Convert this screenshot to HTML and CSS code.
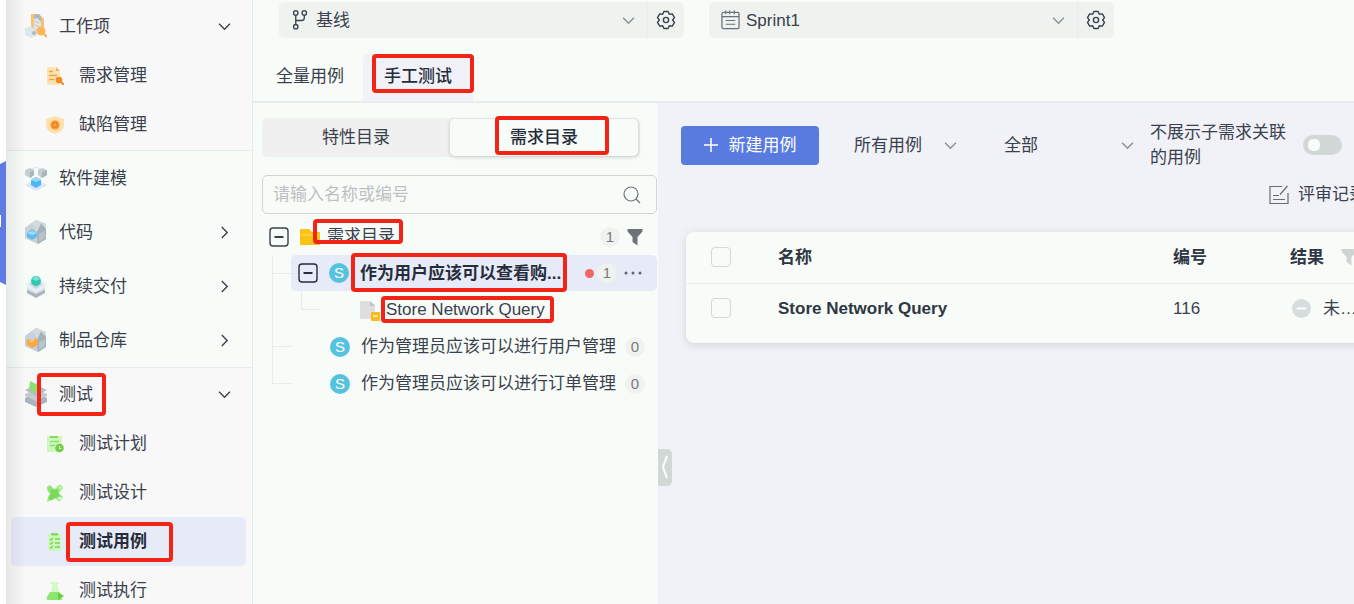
FILE: index.html
```html
<!DOCTYPE html>
<html lang="zh-CN">
<head>
    <meta charset="utf-8" />
    <title>测试用例</title>
    <link rel="stylesheet" href="styles.css">
</head>
<body>
    <!-- shared icons -->
    <svg class="defs" aria-hidden="true">
        <symbol id="down" viewBox="0 0 12 12"><path d="M1 3.5l5 5 5-5" fill="none" stroke="currentColor" stroke-width="1.3"/></symbol>
        <symbol id="right" viewBox="0 0 12 12"><path d="M3.5 1l5 5-5 5" fill="none" stroke="currentColor" stroke-width="1.3"/></symbol>
        <symbol id="gear" viewBox="0 0 20 20">
            <path d="M7.9 1.500h4.200L13.300 4.300 16.300 3.900 18.500 7.600 16.600 10l1.900 2.400-2.200 3.700-3-.4-1.200 2.800H7.900l-1.200-2.800-3 .4-2.200-3.700L3.400 10 1.500 7.600l2.200-3.700 3 .4z" fill="none" stroke="currentColor" stroke-width="1.400" stroke-linejoin="round"/>
            <circle cx="10" cy="10" r="2.600" fill="none" stroke="currentColor" stroke-width="1.4"/>
        </symbol>
        <symbol id="funnel" viewBox="0 0 16 18"><path d="M.5 1h15v2.500L10.500 9v8.500L5.500 14V9L.5 3.500z" fill="currentColor"/></symbol>
        <symbol id="minus" viewBox="0 0 20 20">
            <rect x="1" y="1" width="18" height="18" rx="3" fill="none" stroke="currentColor" stroke-width="1.400"/>
            <path d="M5.500 10h9" stroke="currentColor" stroke-width="2"/>
        </symbol>
        <symbol id="cube" viewBox="0 0 22 26">
            <path d="M0 9 11 1l10 4v15l-8 5L0 19z" fill="#b8c3cb"/>
            <path d="M7 4 12 1l9 4v5l-5-6-4 9z" fill="#d3dade"/>
            <path d="M12 13l4-8 5 5v10l-8 5z" fill="#a6b2ba"/>
            <path d="M0 9l7-5 5 9v11L0 19z" fill="#c9d2d8"/>
            <path d="M14 15l6-3v7l-6 4z" fill="#b9c4ca"/>
        </symbol>
    </svg>

    <div class="app">
        <div class="rail"><div class="rail-tab"></div></div>

        <nav class="sidebar">
            <div class="group group-open">
                <a class="item" href="#">
                    <svg class="icon" viewBox="0 0 22 26">
                        <path d="M6 1h8l5 5v14H6z" fill="#fbc172"/><path d="M9 4c3-3 7-2 7 2v12l-7-2z" fill="#dfe6ea"/>
                        <path d="M9 2c2-2 6-1 7 2v5l-4-4-3 1z" fill="#aeb9be"/><path d="M10 8l4 2m-4 2 4 2" stroke="#b5c0c9"/>
                        <path d="M0 15l6-2 6 6v4l-6 2-6-3z" fill="#dce6ee"/><circle cx="9" cy="20" r="2" fill="#adbac2"/>
                        <circle cx="16" cy="18" r="4.500" fill="#fdb75a"/><path d="M19 21l3 3" stroke="#f6b055" stroke-width="2"/>
                    </svg>
                    <span>工作项</span>
                    <svg class="arrow"><use href="#down"/></svg>
                </a>
                <a class="item sub" href="#">
                    <svg class="icon" viewBox="0 0 18 18">
                        <path d="M1 0h9l4 4v14H1z" fill="#fde3b5"/><path d="M10 0l4 4h-4z" fill="#f8b455"/>
                        <path d="M3 4.500h4M3 8.500h8M3 12.500h5" stroke="#f4a03a" stroke-width="1.500"/>
                        <circle cx="13" cy="13" r="3.300" fill="#f58a1f"/><path d="M15 15l3 3" stroke="#f58a1f" stroke-width="2"/>
                    </svg>
                    <span>需求管理</span>
                </a>
                <a class="item sub" href="#">
                    <svg class="icon" viewBox="0 0 18 18">
                        <path d="M9 0l9 3v6c0 5-4 7-9 9-5-2-9-4-9-9V3z" fill="#fde0ab"/>
                        <circle cx="9" cy="9" r="4.800" fill="#f9a545"/><circle cx="9" cy="9" r="2.500" fill="none" stroke="#e9801e" stroke-width="1.500"/>
                    </svg>
                    <span>缺陷管理</span>
                </a>
            </div>

            <div class="group">
                <a class="item" href="#">
                    <svg class="icon" viewBox="0 0 22 26">
                        <path d="M0 20l11-6 11 6-11 6z" fill="#dbe5f5"/><path d="M5 5l6-3 6 3M4 9l5 7m9-7-5 7" fill="none" stroke="#d4e4ef"/>
                        <path d="M0 5l5-2 4 2v5l-4 3-5-3zM13 5l4-2 5 2v5l-5 3-4-3z" fill="#c5cdd2"/>
                        <path d="M5 7l4-2v5l-4 3zM17 7l5-2v5l-5 3z" fill="#abb5bc"/>
                        <path d="M6 15l5-3 5 3v5l-5 3-5-3z" fill="#4db9f2"/><path d="M6 15l5-3 5 3-5 2z" fill="#94d8fa"/>
                    </svg>
                    <span>软件建模</span>
                </a>
                <a class="item" href="#">
                    <svg class="icon" viewBox="0 0 22 26">
                        <use href="#cube"/><path d="M2 14l5-4 5 4v4l-5 3-5-3z" fill="#5dbcf2"/><path d="M2 14l5-2 5 2-5 2z" fill="#a4dcf9"/>
                    </svg>
                    <span>代码</span>
                    <svg class="arrow"><use href="#right"/></svg>
                </a>
                <a class="item" href="#">
                    <svg class="icon" viewBox="0 0 22 26">
                        <path d="M2 10l9-4 9 4v9l-9 5-9-5z" fill="#d5dee6"/><path d="M2 17l9 4 9-4v3l-9 5-9-5z" fill="#aab5bd"/>
                        <path d="M0 11l5-3 6 5 6-5 5 3-3 4-8 5-8-5z" fill="#e8eef4"/><path d="M4 11l7 5 7-5-7-3z" fill="#c6d6dd"/>
                        <circle cx="11" cy="8" r="5" fill="#2ec8b5"/><path d="M7 6l4-3 4 3-4 2z" fill="#7ce3d3"/>
                    </svg>
                    <span>持续交付</span>
                    <svg class="arrow"><use href="#right"/></svg>
                </a>
                <a class="item" href="#">
                    <svg class="icon" viewBox="0 0 22 26">
                        <use href="#cube"/><path d="M1 14l3-2 3 2 3-3 3 2v4l-3 3-3 1-5-3z" fill="#f9a944"/><path d="M4 14l3 1 3-3" stroke="#fdd18c" fill="none"/>
                    </svg>
                    <span>制品仓库</span>
                    <svg class="arrow"><use href="#right"/></svg>
                </a>
            </div>

            <div class="group group-open">
                <a class="item" href="#">
                    <svg class="icon" viewBox="0 0 22 26">
                        <path d="M0 17l11-5 11 5v4l-11 5-11-5z" fill="#a9b5bc"/><path d="M0 13l11-5 11 5v2l-11 5-11-5z" fill="#c1cbd0"/>
                        <path d="M0 9l11-5 11 5-11 6z" fill="#b2bec4"/><path d="M5 0l6 3 5-2v7l-6 4-6-4z" fill="#8be070"/>
                    </svg>
                    <span class="mark mark-lg">测试</span>
                    <svg class="arrow"><use href="#down"/></svg>
                </a>
                <a class="item sub" href="#">
                    <svg class="icon" viewBox="0 0 18 18">
                        <path d="M1 1h15v16H1z" fill="#cdf8bb"/><path d="M4 1h8v2H4z" fill="#83dc61"/>
                        <path d="M4 6.500h9M4 10.500h5" stroke="#8be070" stroke-width="1.500"/>
                        <circle cx="13.500" cy="13" r="4.300" fill="#73cc4c"/><path d="M13.500 11v2.500h2" stroke="#d9fbcb" fill="none"/>
                    </svg>
                    <span>测试计划</span>
                </a>
                <a class="item sub" href="#">
                    <svg class="icon" viewBox="0 0 18 18">
                        <path d="M12 1.500c2-2 6 1 4.500 3.500L6 16.500 1 18l1-5.500z" fill="#a3f088"/>
                        <path d="M1 3l3-2 4 4 9 8-3.500 4.500L9 14 1.500 7z" fill="#8ee772"/>
                        <path d="M5 6l7-1 1 7-7 4-4-1 2-4z" fill="#78da57"/>
                        <path d="M12 13.500l1.500 1.500 1.500-2M13.500 3l1.500 1.500" stroke="#eaffdf" stroke-width="1.500" fill="none"/>
                    </svg>
                    <span>测试设计</span>
                </a>
                <a class="item sub active" href="#">
                    <svg class="icon" viewBox="0 0 18 18">
                        <path d="M2 1h13v17H2z" fill="#cdf8bb"/><path d="M5 0h7v2.500H5z" fill="#83dc61"/>
                        <path d="M4 6l1 1 2-2M4 10l1 1 2-2M4 14l1 1 2-2M9 6h5M9 10h5M9 14h5" stroke="#79d458" stroke-width="1.300" fill="none"/>
                    </svg>
                    <span class="mark mark-case-menu">测试用例</span>
                </a>
                <a class="item sub" href="#">
                    <svg class="icon" viewBox="0 0 18 18">
                        <path d="M4 0h9v2h-1v5l5 10H1L6 7V2H4z" fill="#d3fac4"/><path d="M4 10h8l4 8H2c-1 0-2-1-1-3z" fill="#8be66c"/>
                        <path d="M12 10l6 4-6 4z" fill="#68cf43"/>
                    </svg>
                    <span>测试执行</span>
                </a>
            </div>
        </nav>

        <main class="main">
            <header class="topbar">
                <div class="picker">
                    <svg class="picker-icon" viewBox="0 0 20 22" fill="none" stroke="currentColor" stroke-width="1.400">
                        <circle cx="5" cy="3.500" r="2.300"/><circle cx="14" cy="3.500" r="2.300"/><circle cx="5" cy="18" r="2.300"/>
                        <path d="M5 6v9.500M14 6v2.500c0 2-1 3-3 3H5"/>
                    </svg>
                    <select aria-label="基线"><option>基线</option></select>
                    <svg class="caret"><use href="#down"/></svg>
                    <button class="picker-set" aria-label="基线设置"><svg><use href="#gear"/></svg></button>
                </div>
                <div class="picker">
                    <svg class="picker-icon thin" viewBox="0 0 20 22" fill="none" stroke="currentColor">
                        <rect x="1" y="3" width="18" height="17" rx="1.500" stroke-width="1.300"/>
                        <path d="M1 7.500h18M5 1v4M9 1v4M14 1v4M5 11.500h10M5 15.500h10" stroke-width="1.200"/>
                    </svg>
                    <select aria-label="迭代"><option>Sprint1</option></select>
                    <svg class="caret"><use href="#down"/></svg>
                    <button class="picker-set" aria-label="迭代设置"><svg><use href="#gear"/></svg></button>
                </div>
            </header>

            <div class="tabs">
                <a class="tab" href="#">全量用例</a>
                <a class="tab current" href="#"><span class="mark mark-tab">手工测试</span></a>
            </div>

            <div class="work">
                <aside class="catalog">
                    <div class="switcher">
                        <button>特性目录</button>
                        <button class="on"><span class="mark mark-switch">需求目录</span></button>
                    </div>
                    <div class="search">
                        <input type="text" placeholder="请输入名称或编号" aria-label="搜索">
                        <svg viewBox="0 0 18 18" fill="none" stroke="currentColor" stroke-width="1.200"><circle cx="8" cy="8" r="7"/><path d="M13 13l4 4"/></svg>
                    </div>

                    <ul class="tree">
                        <li>
                            <div class="row root">
                                <button class="fold" aria-label="收起"><svg><use href="#minus"/></svg></button>
                                <svg class="node-icon" viewBox="0 0 20 20"><path d="M0 2h9l3 3h8v13H0z" fill="#fbc312"/><path d="M1 8h18" stroke="#fddc70"/></svg>
                                <span class="name"><span class="mark mark-root">需求目录</span></span>
                                <span class="count">1</span>
                                <button class="funnel" aria-label="筛选"><svg><use href="#funnel"/></svg></button>
                            </div>
                            <ul>
                                <li>
                                    <div class="row selected">
                                        <button class="fold" aria-label="收起"><svg><use href="#minus"/></svg></button>
                                        <span class="story">S</span>
                                        <span class="name mark mark-story">作为用户应该可以查看购...</span>
                                        <span class="dot"></span>
                                        <span class="count">1</span>
                                        <button class="more" aria-label="更多"><svg viewBox="0 0 18 4" fill="currentColor"><circle cx="2" cy="2" r="1.500"/><circle cx="9" cy="2" r="1.500"/><circle cx="16" cy="2" r="1.500"/></svg></button>
                                    </div>
                                    <ul>
                                        <li>
                                            <div class="row case">
                                                <svg class="node-icon" viewBox="0 0 20 20"><path d="M0 1h10l5 5v13H0z" fill="#dedede"/><path d="M10 1l5 5h-5z" fill="#bfc1c8"/><rect x="11" y="12" width="9" height="9" rx="1" fill="#f3bd22"/><path d="M13 16h5" stroke="#fff"/></svg>
                                                <span class="name"><span class="mark mark-case">Store Network Query</span></span>
                                            </div>
                                        </li>
                                    </ul>
                                </li>
                                <li>
                                    <div class="row leaf">
                                        <span class="story">S</span>
                                        <span class="name">作为管理员应该可以进行用户管理</span>
                                        <span class="count">0</span>
                                    </div>
                                </li>
                                <li>
                                    <div class="row leaf">
                                        <span class="story">S</span>
                                        <span class="name">作为管理员应该可以进行订单管理</span>
                                        <span class="count">0</span>
                                    </div>
                                </li>
                            </ul>
                        </li>
                    </ul>
                    <button class="collapse" aria-label="收起目录"><svg viewBox="0 0 8 26"><path d="M6 2 2 13l4 11" fill="none" stroke="#fff" stroke-width="2"/></svg></button>
                </aside>

                <section class="content">
                    <div class="toolbar">
                        <button class="create"><svg viewBox="0 0 14 14"><path d="M7 0v14M0 7h14" stroke="#fff" stroke-width="1.500"/></svg>新建用例</button>
                        <div class="filter">
                            <select aria-label="用例范围"><option>所有用例</option></select>
                            <svg class="caret"><use href="#down"/></svg>
                        </div>
                        <div class="filter wide">
                            <select aria-label="状态"><option>全部</option></select>
                            <svg class="caret"><use href="#down"/></svg>
                        </div>
                        <label class="toggle-label" for="hide-child">不展示子需求关联的用例</label>
                        <input class="toggle" id="hide-child" type="checkbox">
                    </div>
                    <div class="actions">
                        <a class="review" href="#">
                            <svg viewBox="0 0 20 20" fill="none" stroke="currentColor" stroke-width="1.200"><path d="M13 1.500H1v17h18V8M4 10.500h6M4 14.500h12M18.500 1 11 9.500"/></svg>评审记录
                        </a>
                    </div>

                    <div class="card">
                        <table>
                            <thead>
                                <tr>
                                    <th class="col-check"><input type="checkbox" aria-label="全选"></th>
                                    <th>名称</th>
                                    <th class="col-id">编号</th>
                                    <th class="col-result"><span class="with-icon">结果<svg class="th-funnel"><use href="#funnel"/></svg></span></th>
                                </tr>
                            </thead>
                            <tbody>
                                <tr>
                                    <td class="col-check"><input type="checkbox" aria-label="选择 Store Network Query"></td>
                                    <td class="case-name">Store Network Query</td>
                                    <td>116</td>
                                    <td><span class="with-icon result"><svg viewBox="0 0 20 20"><circle cx="10" cy="10" r="10" fill="#d7dddd"/><path d="M5 10h10" stroke="#fff" stroke-width="2"/></svg>未…</span></td>
                                </tr>
                            </tbody>
                        </table>
                    </div>
                </section>
            </div>
        </main>
    </div>
</body>
</html>
```
FILE: styles.css
```css
* {
    box-sizing: border-box;
}

body {
    margin: 0;
    font-family: "Liberation Sans", "Noto Sans CJK SC", sans-serif;
    font-size: 17px;
    line-height: 25px;
    color: #3a414d;
    background: #f8fcf9;
}

a {
    color: inherit;
    text-decoration: none;
}

button, input, select {
    font: inherit;
    color: inherit;
    margin: 0;
    padding: 0;
    border: 0;
    background: none;
}

button {
    display: flex;
    align-items: center;
    justify-content: center;
    cursor: pointer;
}

select {
    appearance: none;
    cursor: pointer;
}

ul {
    list-style: none;
    margin: 0;
    padding: 0;
}

svg {
    display: block;
    flex: none;
}

.defs {
    position: absolute;
    width: 0;
    height: 0;
}

.app {
    display: flex;
    height: 100vh;
    overflow: hidden;
}

/* red call-outs around a label */
.mark {
    position: relative;
}

.mark::after {
    content: "";
    position: absolute;
    border: 4px solid #f32315;
    border-radius: 4px;
    z-index: 2;
    pointer-events: none;
}

.mark-lg::after { inset: -9px -13px -9px -22px; }
.mark-case-menu::after { inset: -7px -26px -8px -13px; }
.mark-tab::after { inset: -13px -22px -7px -12px; }
.mark-switch::after { inset: -9px -31px -5px -15px; }
.mark-root::after { inset: -8px -8px 2px -14px; }
.mark-story::after { inset: -8px 7px -6px -9px; }
.mark-case::after { inset: -4px -9px -4px -5px; }

/* left rail */
.rail {
    flex: none;
    width: 6px;
    background: #fff;
    padding-top: 161px;
}

.rail-tab {
    height: 124px;
    background: #5f7ae0;
    clip-path: polygon(0 3px, 100% 0, 100% 100%, 0 121px);
}

.rail-tab::before {
    content: "";
    display: block;
    width: 1px;
    height: 54px;
    border-bottom: 12px solid #fff;
}

/* sidebar */
.sidebar {
    position: relative;
    flex: none;
    width: 247px;
    border-right: 1px solid #e6ecee;
}

.sidebar::after {
    content: "";
    position: absolute;
    inset: 0 auto 0 0;
    width: 20px;
    height: 100vh;
    background: linear-gradient(to right, rgba(0, 0, 0, .07), rgba(0, 0, 0, 0));
    pointer-events: none;
}

.group + .group {
    border-top: 1px solid #e6ecee;
}

.group-open {
    padding: 1px 0;
    background: #f8f8f8;
}

.item {
    display: flex;
    align-items: center;
    gap: 12px;
    height: 54px;
    padding: 0 21px 0 19px;
}

.group-open .item {
    height: 50px;
}

.item .icon {
    width: 22px;
    height: 26px;
}

.arrow {
    width: 13px;
    height: 13px;
    margin-left: auto;
}

.group-open .sub {
    height: 49px;
    margin: 0 6px 0 5px;
    padding-left: 35px;
    gap: 15px;
    border-radius: 5px;
}

.sub .icon {
    width: 18px;
    height: 18px;
}

.sub.active {
    background: #e7eaf7;
    color: #262c3a;
    font-weight: bold;
}

/* header */
.main {
    flex: 1;
    min-width: 0;
    display: flex;
    flex-direction: column;
}

.topbar {
    display: flex;
    gap: 25px;
    padding: 2px 26px 0;
}

.picker {
    display: flex;
    align-items: center;
    width: 405px;
    height: 36px;
    padding-left: 12px;
    border-radius: 5px;
    background: #eff3f0;
}

.picker-icon {
    width: 19px;
    height: 22px;
    margin-right: 6px;
}

.thin {
    color: #69707c;
}

.picker select {
    flex: 1;
    height: 36px;
}

.caret {
    width: 13px;
    height: 13px;
    color: #888f96;
    pointer-events: none;
}

.picker-set {
    width: 37px;
    height: 36px;
    margin-left: 12px;
    border-left: 1px solid #e8ecea;
}

.picker-set svg {
    width: 20px;
    height: 20px;
}

.tabs {
    display: flex;
    margin-top: 16px;
    padding-left: 2px;
    border-bottom: 2px solid #e7edee;
}

.tab {
    padding: 10px 19px 12px 21px;
}

.tab.current {
    padding-right: 21px;
    background: #f0f2f8;
    border-radius: 5px 5px 0 0;
    color: #262c3a;
    font-weight: 500;
}

.work {
    flex: 1;
    min-height: 0;
    display: flex;
}

/* catalog */
.catalog {
    position: relative;
    flex: none;
    width: 405px;
    padding: 15px 1px 0 9px;
}

.switcher {
    display: flex;
    margin-right: 17px;
    padding: 1px 2px 1px 0;
    border-radius: 5px;
    background: #f0f0f0;
}

.switcher button {
    flex: 1;
    height: 37px;
    border-radius: 5px;
}

.switcher .on {
    background: #f8fcf9;
    color: #262c3a;
    font-weight: 500;
    box-shadow: 0 1px 4px rgba(0, 0, 0, .18);
}

.search {
    display: flex;
    align-items: center;
    height: 39px;
    margin-top: 18px;
    padding: 0 15px 0 10px;
    border: 1px solid #cfd5d3;
    border-radius: 5px;
}

.search input {
    flex: 1;
    min-width: 0;
    outline: 0;
}

.search input::placeholder {
    color: #bcc0c2;
    opacity: 1;
}

.search svg {
    width: 18px;
    height: 18px;
    color: #6f7679;
}

.tree {
    margin-top: 4px;
}

.tree ul {
    margin-left: 29px;
}

.tree li {
    position: relative;
}

/* connector lines */
.tree ul > li::before {
    content: "";
    position: absolute;
    left: -19px;
    top: 0;
    width: 18px;
    height: 18px;
    border: solid #e8ebea;
    border-width: 0 0 1px 1px;
}

.tree ul > li:not(:last-child)::after {
    content: "";
    position: absolute;
    left: -19px;
    top: 0;
    bottom: 0;
    border-left: 1px solid #e8ebea;
}

.row {
    display: flex;
    align-items: center;
    height: 37px;
    padding-left: 7px;
    gap: 11px;
    border-radius: 5px;
}

.row.root {
    padding-right: 14px;
    gap: 7px;
}

.root .fold {
    margin-right: 4px;
}

.row.selected {
    height: 36px;
    padding-right: 15px;
    background: #e7eaf7;
    color: #262c3a;
}

.row.leaf {
    padding: 0 12px 0 39px;
}

.row.case {
    padding-left: 40px;
    gap: 6px;
}

.fold svg, .node-icon {
    width: 20px;
    height: 20px;
}

.node-icon {
    overflow: visible;
}

.name {
    flex: 1;
    white-space: nowrap;
}

.selected .name {
    font-weight: bold;
}

.story {
    flex: none;
    width: 20px;
    line-height: 20px;
    border-radius: 50%;
    background: #55c3e0;
    color: #fff;
    font-size: 15px;
    text-align: center;
}

.count {
    flex: none;
    width: 20px;
    line-height: 20px;
    border-radius: 50%;
    background: #eff2ef;
    color: #777b80;
    font-size: 15px;
    text-align: center;
}

.leaf .count {
    margin-left: -6px;
}

.funnel svg {
    width: 16px;
    height: 18px;
    color: #6d7277;
}

.dot {
    width: 9px;
    height: 9px;
    border-radius: 50%;
    background: #ee6666;
}

.selected .count {
    margin: 0 -4px 0 -8px;
}

.more svg {
    width: 18px;
    height: 4px;
    color: #62666f;
}

.collapse {
    position: absolute;
    left: 100%;
    top: 69%;
    width: 14px;
    height: 37px;
    border-radius: 0 5px 5px 0;
    background: #d1d8d6;
}

.collapse svg {
    width: 8px;
    height: 26px;
}

/* content */
.content {
    flex: 1;
    min-width: 0;
    overflow: hidden;
    padding: 17px 0 0 23px;
    background: #f0f2f8;
}

.toolbar {
    display: flex;
    align-items: center;
    height: 50px;
    padding-right: 12px;
}

.create {
    flex: none;
    width: 138px;
    height: 39px;
    gap: 11px;
    border-radius: 4px;
    background: #597be0;
    color: #fff;
}

.create svg {
    width: 14px;
    height: 14px;
}

.filter {
    display: flex;
    align-items: center;
    flex: none;
    width: 103px;
    margin-left: 35px;
}

.filter select {
    flex: 1;
    min-width: 0;
}

.filter.wide {
    width: 130px;
    margin-left: 47px;
}

.toggle-label {
    width: 137px;
    margin-left: 16px;
}

.toggle {
    appearance: none;
    flex: none;
    width: 39px;
    height: 20px;
    margin-left: auto;
    padding: 4px 5px;
    border-radius: 10px;
    background: #d1d8d6;
}

.toggle::before {
    content: "";
    display: block;
    width: 12px;
    height: 12px;
    border-radius: 5px;
    background: #f8fcf9;
}

.toggle:checked {
    padding-left: 22px;
    background: #597be0;
}

.actions {
    display: flex;
    justify-content: flex-end;
    margin: 12px -12px 0 0;
}

.review {
    display: flex;
    align-items: center;
    gap: 9px;
}

.review svg {
    width: 20px;
    height: 20px;
    color: #666c74;
}

.card {
    margin: 25px -40px 0 5px;
    padding-bottom: 10px;
    border-radius: 8px;
    background: #f8fcf9;
    box-shadow: 0 2px 8px rgba(60, 80, 60, .18);
}

table {
    width: 100%;
    table-layout: fixed;
    border-collapse: collapse;
}

th, td {
    height: 50px;
    padding: 0;
    text-align: left;
}

th {
    height: 51px;
    border-bottom: 1px solid #e8edeb;
    color: #2f3643;
}

.col-check {
    width: 92px;
    padding-left: 25px;
}

.col-id { width: 117px; }
.col-result { width: 104px; }

td.case-name {
    color: #2f3643;
    font-weight: bold;
}

.card input {
    appearance: none;
    display: block;
    width: 20px;
    height: 20px;
    border: 1px solid #d4d8d6;
    border-radius: 4px;
}

.with-icon {
    display: flex;
    align-items: center;
    gap: 17px;
}

.th-funnel {
    width: 16px;
    height: 18px;
    color: #cfd5d4;
}

.result {
    gap: 12px;
    padding-left: 2px;
}

.result svg {
    width: 19px;
    height: 19px;
}
```
